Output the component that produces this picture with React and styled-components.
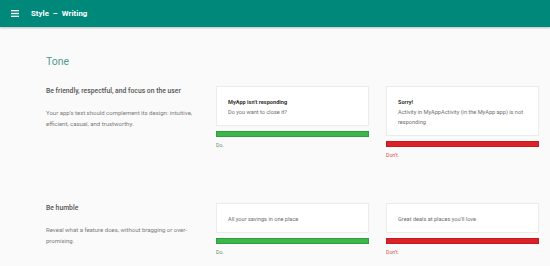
import styled, { createGlobalStyle } from 'styled-components'

const GlobalStyle = createGlobalStyle`
  html, body {
    margin: 0;
    padding: 0;
    background: #fafafa;
    font-family: Roboto, "Liberation Sans", Arial, sans-serif;
  }
`

const Page = styled.div`
  width: 550px;
  height: 266px;
  overflow: hidden;
  background: #fafafa;
`

const AppBar = styled.header`
  display: flex;
  align-items: center;
  height: 27px;
  padding-left: 11px;
  background: #00897b;
  box-shadow: 0 1px 2px rgba(0, 0, 0, 0.25);
  color: #fff;
`

const Menu = styled.svg`
  width: 8px;
  height: 7px;
  margin-right: 12px;
`

const BarTitle = styled.h1`
  margin: 0;
  font-size: 7.8px;
  font-weight: 700;
  letter-spacing: 0.05px;
`

const Content = styled.main`
  padding: 28px 11px 0 46px;
`

const SectionTitle = styled.h2`
  margin: 0 0 18px;
  font-size: 10.5px;
  font-weight: 400;
  color: #4f9d8d;
`

const Row = styled.section`
  display: grid;
  grid-template-columns: 153px 153px 153px;
  column-gap: 17px;
  align-items: start;
  margin-bottom: ${p => p.$gap || 0}px;
`

const Intro = styled.div`
  padding-top: 1px;
`

const Heading = styled.h3`
  margin: 0 0 12px;
  font-size: 6.8px;
  font-weight: 500;
  color: #555;
`

const Body = styled.p`
  margin: 0;
  font-size: 6px;
  line-height: 11px;
  color: #7a7a7a;
`

const Example = styled.div`
  display: flex;
  flex-direction: column;
`

const Card = styled.div`
  background: #fff;
  border: 1px solid #ececec;
  box-shadow: 0 0 1px rgba(0, 0, 0, 0.04);
  padding: 10px 11px 8px;
  font-size: 5.6px;
  line-height: 10px;
  color: #6e6e6e;
`

const CardTitle = styled.div`
  font-weight: 700;
  color: #333;
`

const Bar = styled.div`
  height: 6px;
  margin-top: 5px;
  box-sizing: border-box;
  background: ${p => (p.$good ? '#3cb54a' : '#dc2128')};
  border: 1px solid ${p => (p.$good ? '#2f9e3e' : '#c01c22')};
`

const Verdict = styled.div`
  margin-top: 5px;
  font-size: 5.2px;
  color: ${p => (p.$good ? '#6b8e6f' : '#d9534f')};
`

function ExampleCard({ title, text, good }) {
  return (
    <Example>
      <Card>
        {title && <CardTitle>{title}</CardTitle>}
        <div>{text}</div>
      </Card>
      <Bar $good={good} />
      <Verdict $good={good}>{good ? 'Do.' : 'Don\u2019t.'}</Verdict>
    </Example>
  )
}

const guidelines = [
  {
    heading: 'Be friendly, respectful, and focus on the user',
    body: 'Your app\u2019s text should complement its design: intuitive, efficient, casual, and trustworthy.',
    doCard: { title: 'MyApp isn\u2019t responding', text: 'Do you want to close it?' },
    dontCard: { title: 'Sorry!', text: 'Activity in MyAppActivity (in the MyApp app) is not responding' },
    gap: 45,
  },
  {
    heading: 'Be humble',
    body: 'Reveal what a feature does, without bragging or over-promising.',
    doCard: { text: 'All your savings in one place' },
    dontCard: { text: 'Great deals at places you\u2019ll love' },
    gap: 0,
  },
]

export default function App() {
  return (
    <Page>
      <GlobalStyle />
      <AppBar>
        <Menu viewBox="0 0 8 7">
          <rect x="0" y="0" width="8" height="1.3" fill="#fff" />
          <rect x="0" y="2.85" width="8" height="1.3" fill="#fff" />
          <rect x="0" y="5.7" width="8" height="1.3" fill="#fff" />
        </Menu>
        <BarTitle>Style&nbsp; – &nbsp;Writing</BarTitle>
      </AppBar>
      <Content>
        <SectionTitle>Tone</SectionTitle>
        {guidelines.map((g, i) => (
          <Row key={`Row-${i}`} $gap={g.gap}>
            <Intro>
              <Heading>{g.heading}</Heading>
              <Body>{g.body}</Body>
            </Intro>
            <ExampleCard {...g.doCard} good />
            <ExampleCard {...g.dontCard} />
          </Row>
        ))}
      </Content>
    </Page>
  )
}
